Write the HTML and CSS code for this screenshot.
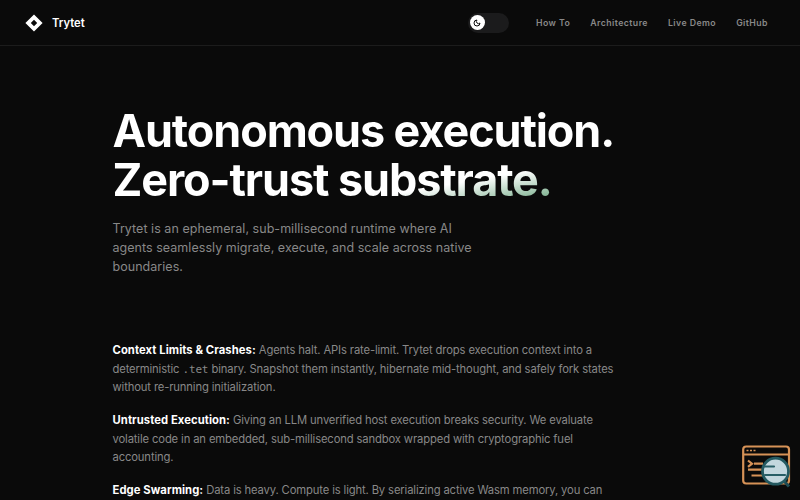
FILE: index.html
```html
<!DOCTYPE html>
<html lang="en">
<head>
    <meta charset="UTF-8">
    <meta name="viewport" content="width=device-width, initial-scale=1.0">
    <title>Trytet</title>
    <link rel="stylesheet" href="styles.css">
</head>
<body>
    <header class="header">
        <a class="brand" href="#">
            <svg class="logo" viewBox="0 0 18 18">
                <path d="M9 .4 17.6 9 9 17.6.4 9zM9 5.8 5.8 9 9 12.2 12.2 9z" fill="#fff" fill-rule="evenodd"/>
            </svg>
            <span>Trytet</span>
        </a>
        <nav class="nav">
            <button class="toggle" id="toggle" aria-label="Toggle theme">
                <span class="knob">
                    <svg class="moon" viewBox="0 0 24 24">
                        <path d="M12 3a6 6 0 0 0 9 9 9 9 0 1 1-9-9z"/>
                    </svg>
                </span>
            </button>
            <a href="#how">How To</a>
            <a href="#architecture">Architecture</a>
            <a href="#demo">Live Demo</a>
            <a href="#github">GitHub</a>
        </nav>
    </header>

    <main class="container">
        <h1 class="title"><span class="titleText">Autonomous execution.<br>Zero-trust substrate.</span></h1>
        <p class="lead">Trytet is an ephemeral, sub-millisecond runtime where AI agents seamlessly migrate, execute, and scale across native boundaries.</p>
        <section class="points">
            <p><strong>Context Limits &amp; Crashes:</strong> Agents halt. APIs rate-limit. Trytet drops execution context into a deterministic <code>.tet</code> binary. Snapshot them instantly, hibernate mid-thought, and safely fork states without re-running initialization.</p>
            <p><strong>Untrusted Execution:</strong> Giving an LLM unverified host execution breaks security. We evaluate volatile code in an embedded, sub-millisecond sandbox wrapped with cryptographic fuel accounting.</p>
            <p><strong>Edge Swarming:</strong> Data is heavy. Compute is light. By serializing active Wasm memory, you can</p>
        </section>
    </main>

    <svg class="badge" viewBox="0 0 50 44">
        <g fill="none" stroke="#d69257" stroke-width="2.2">
            <rect x="2.2" y="1.5" width="45.8" height="37" rx="3"/>
            <path d="M2 9.5h46"/>
            <path d="M7 15.5l4 3.2-4 3.2M13 18.7h9M7 24.7h14M10.5 30.5h12"/>
            <path d="M5.5 5.5h2M9 5.5h2M12.5 5.5h2" stroke-width="1.5"/>
        </g>
        <path d="M43 36l5 5.5" stroke="#1d4c54" stroke-width="3"/>
        <circle cx="34.5" cy="26.2" r="13" fill="#c3d7de" stroke="#245960" stroke-width="2.8"/>
        <path d="M22 21.5h11M24 30h20" stroke="#285e66" stroke-width="2.2" stroke-linecap="round"/>
    </svg>
</body>
</html>
```

FILE: styles.css
```css
*{
    padding: 0;
    margin: 0;
    box-sizing: border-box;
}
body{
    height: 500px;
    overflow: hidden;
    background-color: #0a0a0a;
    color: #888;
    font-family: Inter, "Liberation Sans", sans-serif;
}
a{
    color: inherit;
    text-decoration: none;
}
.header{
    height: 46px;
    padding: 0 32px 0 25px;
    display: flex;
    align-items: center;
    justify-content: space-between;
    border-bottom: 1px solid #1c1c1c;
}
.brand{
    display: flex;
    align-items: center;
    gap: 9px;
    color: #fff;
    font-size: 11.25px;
    font-weight: 600;
}
.logo{
    width: 18px;
    height: 18px;
}
.nav{
    display: flex;
    align-items: center;
    gap: 20px;
    font-size: 8.75px;
    font-weight: 600;
    letter-spacing: 0.43px;
}
.toggle{
    width: 41px;
    height: 20px;
    margin-right: 7px;
    padding: 2px;
    border: 0;
    border-radius: 10px;
    background-color: #1b1b1c;
}
.knob{
    width: 15px;
    height: 15px;
    display: flex;
    align-items: center;
    justify-content: center;
    border-radius: 50%;
    background-color: #fff;
}
.moon{
    width: 8px;
    height: 8px;
    fill: none;
    stroke: #0a0a0a;
    stroke-width: 3;
    stroke-linejoin: round;
}
.container{
    width: 575px;
    margin: 0 auto;
    padding-top: 60px;
}
.title{
    font-size: 45px;
    line-height: 49px;
    font-weight: 700;
    letter-spacing: -1.12px;
}
.titleText{
    display: block;
    color: transparent;
    background: linear-gradient(170deg, #fff 69%, #6fa883 86%);
    background-clip: text;
    -webkit-background-clip: text;
}
.lead{
    width: 375px;
    margin-top: 16px;
    font-size: 12.5px;
    line-height: 18.75px;
    letter-spacing: 0.04px;
}
.points{
    width: 505px;
    margin-top: 65px;
    font-size: 11.25px;
    line-height: 18.4px;
    letter-spacing: -0.14px;
}
.points p{
    margin-bottom: 14.8px;
}
.points strong{
    color: #fff;
    font-weight: 700;
    letter-spacing: 0.07px;
}
.points code{
    font-family: "DejaVu Sans Mono", monospace;
    font-size: 11px;
    line-height: 1;
}
.badge{
    width: 50px;
    height: 44px;
    position: fixed;
    right: 9px;
    bottom: 11px;
}
```
